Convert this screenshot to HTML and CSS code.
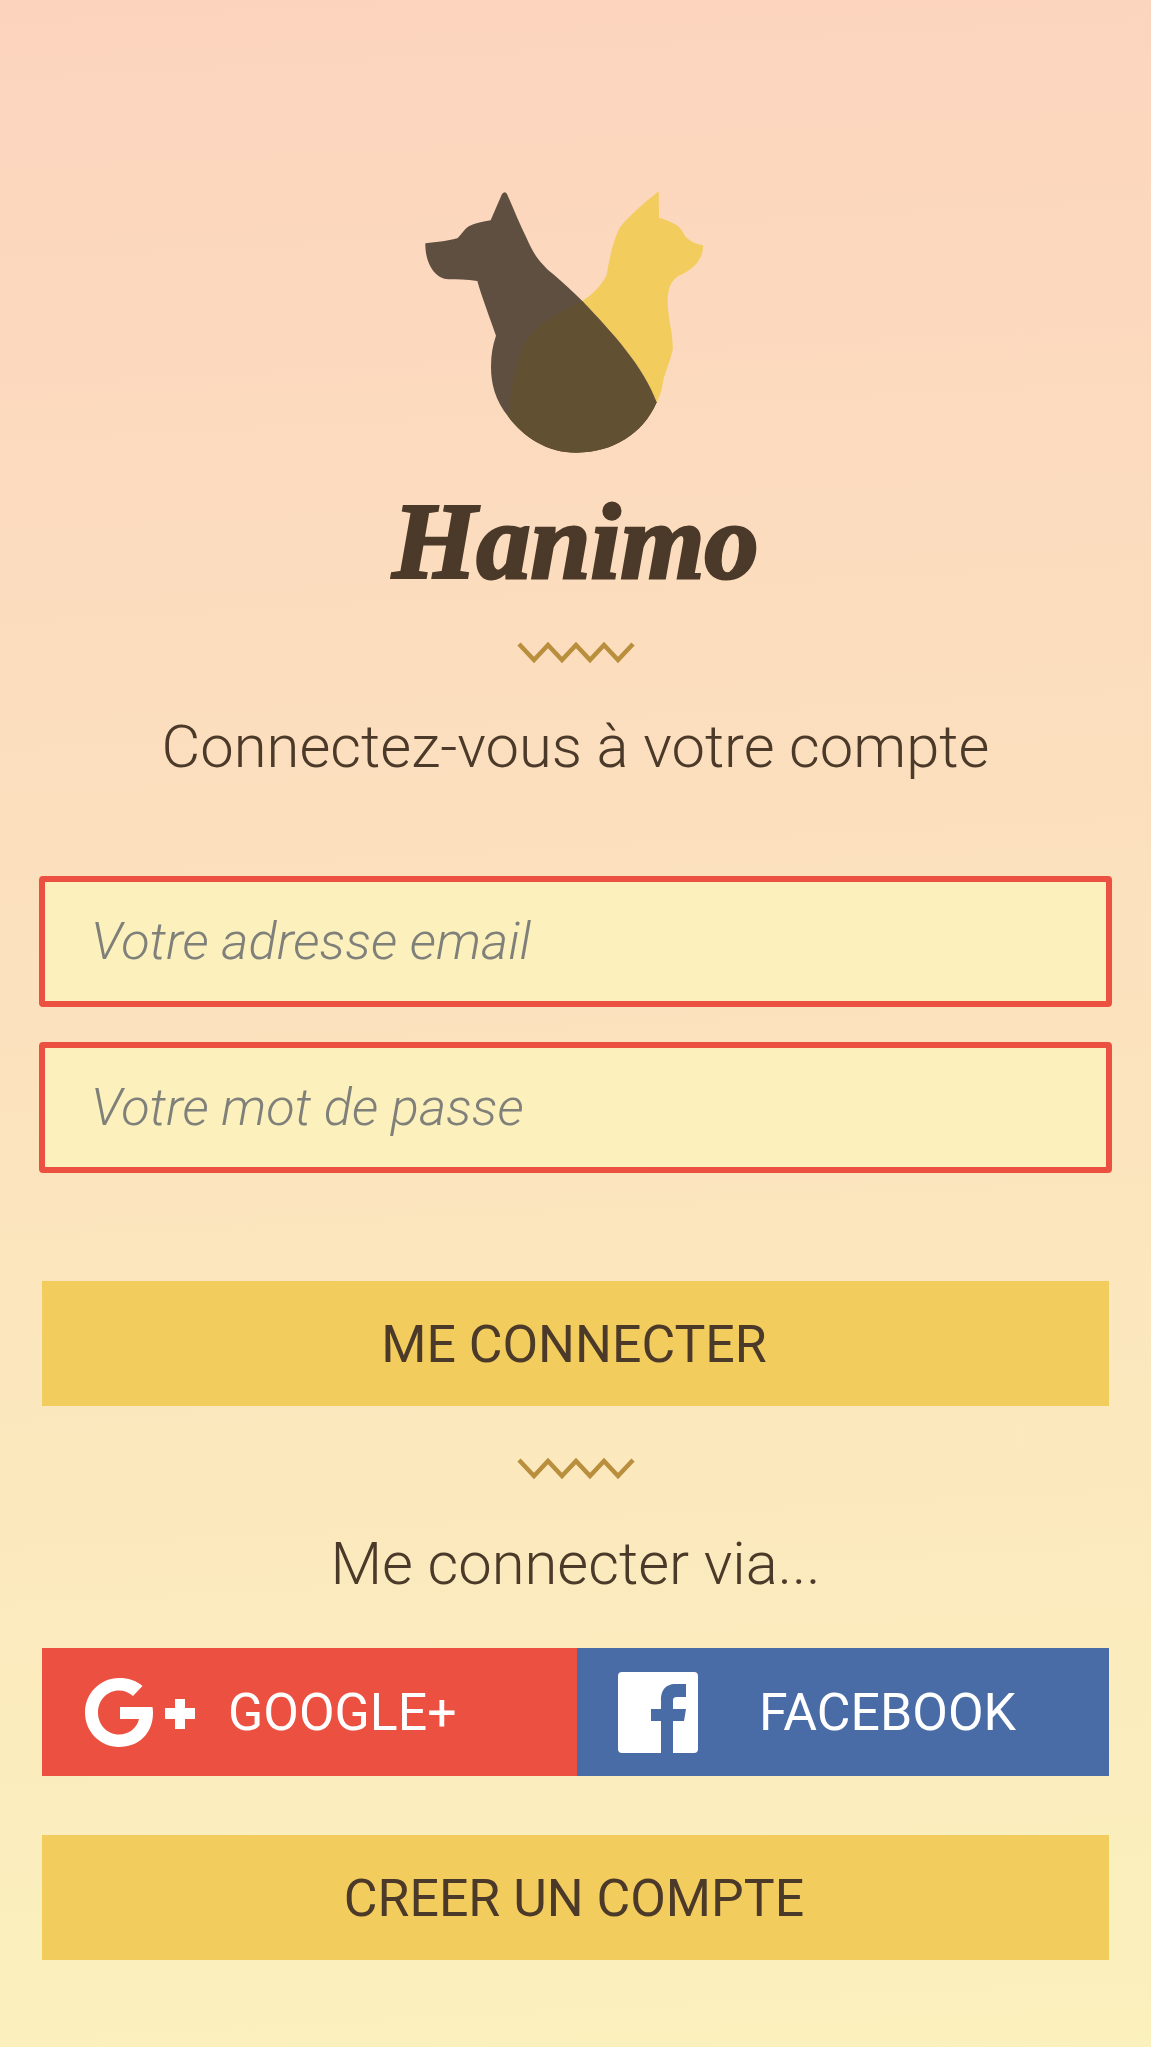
FILE: index.html
```html
<!DOCTYPE html>
<html lang="fr">
<head>
  <meta charset="UTF-8" />
  <meta name="viewport" content="width=device-width, initial-scale=1.0"/>
  <title>Hanimo</title>
  <link rel="stylesheet" href="styles.css">
</head>
<body>

  <div class="page">
    <svg class="logo" viewBox="126.5 60 920 795" aria-hidden="true">
      <path class="dog" d="M136 220 C170 216 210 212 232 205 C245 192 255 175 268 168 C285 160 310 155 332 151 L366 72 Q375 62 381 72 C400 115 420 165 440 205 C455 240 470 265 490 285 C500 297 510 305 520 313 C550 340 578 364 607 393 L830 697 C790 790 700 848 590 848 C500 848 430 800 385 740 C345 690 333 640 333 590 C333 555 338 525 348 497 C325 430 305 380 292 333 C260 328 230 328 205 328 C165 326 135 280 136 220 Z"/>
      <path class="cat" d="M607 393 C640 372 665 345 680 315 C688 265 700 210 720 172 C750 135 795 97 836 64 L837 143 C870 152 895 165 905 180 C915 205 935 220 969 226 C970 270 940 298 895 318 C870 335 863 360 863 395 C864 450 880 490 878 540 C870 575 855 610 850 630 C845 660 840 680 830 697 C790 590 700 490 607 393 Z"/>
      <path class="overlap" d="M607 393 C700 490 790 590 830 697 C790 790 700 848 590 848 C500 848 430 800 385 740 C395 620 415 540 455 490 C480 460 540 425 607 393 Z"/>
    </svg>

    <h1 class="brand">Hanimo</h1>

    <svg class="zigzag zigzag-top" viewBox="0 0 118 22" aria-hidden="true">
      <polyline points="2,2 17,18 31,3 45,18 59,3 73,18 87,3 101,18 116,2"/>
    </svg>

    <h2 class="title">Connectez-vous à votre compte</h2>

    <form class="login">
      <input class="field" type="email" placeholder="Votre adresse email">
      <input class="field" type="password" placeholder="Votre mot de passe">
    </form>

    <a class="btn btn-login" href="#">ME CONNECTER</a>

    <svg class="zigzag zigzag-via" viewBox="0 0 118 22" aria-hidden="true">
      <polyline points="2,2 17,18 31,3 45,18 59,3 73,18 87,3 101,18 116,2"/>
    </svg>

    <h2 class="title title-via">Me connecter via...</h2>

    <div class="social">
      <a class="social-btn google" href="#">
        <svg class="icon-google" viewBox="0 0 111 69" aria-hidden="true">
          <path d="M57.5 8 C51 2.5 43.5 0 34 0 C15 0 0 15.5 0 34.5 C0 53.5 15 69 34 69 C54 69 68 55 68 35 C68 33 67.8 31 67.5 29 L35 29 L35 41 L54 41 C52 50 44 56.5 34 56.5 C22 56.5 13 46.5 13 34.5 C13 22.5 22 12.5 34 12.5 C39.5 12.5 44 14.5 48 18 Z"/>
          <path d="M90 21 H100 V30 H110 V41 H100 V51 H90 V41 H80 V30 H90 Z"/>
        </svg>
        GOOGLE+
      </a>
      <a class="social-btn facebook" href="#">
        <svg class="icon-facebook" viewBox="0 0 80 81" aria-hidden="true">
          <path d="M4 0 H76 Q80 0 80 4 V77 Q80 81 76 81 H55 V49 H66 L68 37 H55 V28 Q55 25 59 25 H68 V12 H58 C46 12 43 20 43 28 V37 H33 V49 H43 V81 H4 Q0 81 0 77 V4 Q0 0 4 0 Z"/>
        </svg>
        FACEBOOK
      </a>
    </div>

    <a class="btn btn-create" href="#">CREER UN COMPTE</a>
  </div>

</body>
</html>
```

FILE: styles.css
```css
html, body {
  margin: 0;
  height: 100%;
}

body {
  font-family: Roboto, sans-serif;
  color: #4b3929;
  background: linear-gradient(177deg, #fcd4be 0%, #fbf1bd 100%);
}

.page {
  display: flex;
  flex-direction: column;
  align-items: center;
  height: 2047px;
  padding: 190px 39px 0;
  box-sizing: border-box;
  overflow: hidden;
}

.logo {
  display: block;
  width: 307px;
  height: 265px;
  flex: none;
}

.dog { fill: #5f4f40; }
.cat { fill: #f2cc5c; }
.overlap { fill: #625032; }

.brand {
  margin: 22px 0 0;
  font-family: "Liberation Serif", serif;
  font-style: italic;
  font-weight: bold;
  font-size: 108px;
  line-height: 130px;
  color: #4b3929;
  -webkit-text-stroke: 3px #4b3929;
}

.zigzag {
  display: block;
  width: 118px;
  height: 22px;
  flex: none;
}

.zigzag polyline {
  fill: none;
  stroke: #b98f3e;
  stroke-width: 4.5;
}

.zigzag-top { margin-top: 35px; }
.zigzag-via { margin-top: 52px; }

.title {
  margin: 48px 0 0;
  font-weight: 300;
  font-size: 59.7px;
  line-height: 70px;
}

.title-via {
  margin-top: 49px;
}

.login {
  width: 100%;
  display: flex;
  flex-direction: column;
  gap: 35px;
  margin-top: 94px;
}

.field {
  display: block;
  width: 100%;
  height: 131px;
  box-sizing: border-box;
  padding: 0 46px 2px;
  border: 6px solid #ec5040;
  border-radius: 4px;
  background: #fcf1bd;
  font-family: Roboto, sans-serif;
  font-size: 52.3px;
  font-weight: 300;
  font-style: italic;
  outline: none;
}

.field::placeholder {
  color: #80807b;
  opacity: 1;
}

.btn {
  display: block;
  width: 1067px;
  height: 125px;
  line-height: 127px;
  flex: none;
  box-sizing: border-box;
  padding-right: 3px;
  text-align: center;
  background: #f2cc5c;
  color: #4b3929;
  font-size: 51.8px;
  text-decoration: none;
}

.btn-login { margin-top: 108px; }
.btn-create { margin-top: 59px; }

.social {
  display: flex;
  width: 1067px;
  height: 128px;
  flex: none;
  margin-top: 49px;
}

.social-btn {
  display: flex;
  align-items: center;
  color: #fff;
  font-size: 51.8px;
  font-weight: 400;
  text-decoration: none;
}

.google {
  width: 535px;
  padding-left: 43px;
  gap: 32px;
  box-sizing: border-box;
  background: #ec5040;
}

.facebook {
  flex: 1;
  padding-left: 41px;
  gap: 61px;
  background: #4a6ca6;
}

.icon-google {
  width: 111px;
  height: 69px;
  fill: #fff;
  flex: none;
}

.icon-facebook {
  width: 80px;
  height: 81px;
  fill: #fff;
  flex: none;
}
```
